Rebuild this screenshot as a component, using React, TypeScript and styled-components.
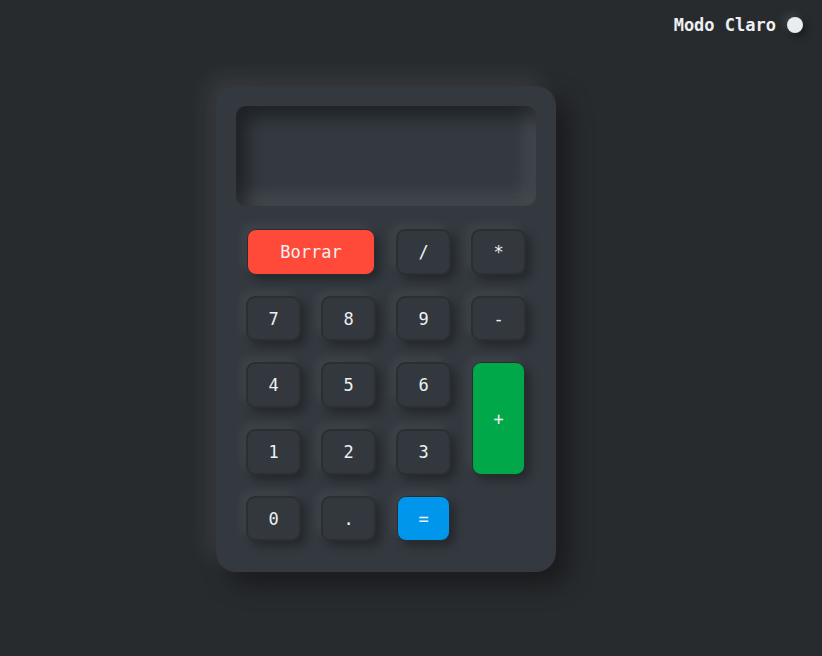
import React from "react";
import styled, { createGlobalStyle, css } from "styled-components";

const Global = createGlobalStyle`
  html, body { margin: 0; padding: 0; }
  body {
    background: #282b2e;
    width: 822px;
    height: 656px;
    overflow: hidden;
    font-family: "DejaVu Sans Mono", monospace;
  }
`;

const Page = styled.div`
  display: flex;
  flex-direction: column;
  width: 822px;
  height: 656px;
`;

const Header = styled.header`
  display: flex;
  justify-content: flex-end;
  align-items: center;
  gap: 11px;
  height: 49px;
  padding-right: 19px;
`;

const ModeLabel = styled.span`
  color: #eef0f2;
  font-weight: bold;
  font-size: 17px;
  line-height: 1;
  padding-top: 2px;
`;

const ToggleDot = styled.span`
  width: 16px;
  height: 16px;
  border-radius: 50%;
  background: #e9edf1;
  box-shadow: -3px -3px 8px rgba(255, 255, 255, 0.12), 3px 3px 8px rgba(0, 0, 0, 0.45);
`;

const Stage = styled.main`
  padding: 37px 0 0 216px;
`;

const Calculator = styled.div`
  width: 300px;
  padding: 20px 20px 21px;
  background: #33393f;
  border-radius: 20px;
  box-shadow: -10px -10px 22px rgba(255, 255, 255, 0.08), 12px 12px 26px rgba(0, 0, 0, 0.42);
`;

const Display = styled.div`
  height: 100px;
  border-radius: 10px;
  background: #33393f;
  box-shadow: inset 10px 10px 18px rgba(0, 0, 0, 0.42),
    inset -10px -10px 18px rgba(255, 255, 255, 0.09);
  margin-bottom: 13px;
`;

const Keys = styled.div`
  display: grid;
  grid-template-columns: repeat(4, 55px);
  grid-auto-rows: 45.7px;
  column-gap: 20px;
  row-gap: 21px;
  padding: 10px;
`;

type Tone = "plain" | "red" | "green" | "blue";

const toneBg: Record<Tone, string> = {
  plain: "#32383e",
  red: "#ff4a3a",
  green: "#00a84a",
  blue: "#0096eb",
};

const Key = styled.button<{ $tone?: Tone; $cols?: number; $rows?: number }>`
  grid-column: span ${(p) => p.$cols ?? 1};
  grid-row: span ${(p) => p.$rows ?? 1};
  box-sizing: border-box;
  margin: 0;
  border: 2px solid #2c2f32;
  border-radius: 9px;
  background: ${(p) => toneBg[p.$tone ?? "plain"]};
  color: #eef0f2;
  font-family: "DejaVu Sans Mono", monospace;
  font-size: 17px;
  padding: 0;
  display: flex;
  align-items: center;
  justify-content: center;
  box-shadow: -5px -5px 10px rgba(255, 255, 255, 0.06), 5px 5px 10px rgba(0, 0, 0, 0.3);
  ${(p) =>
    p.$tone && p.$tone !== "plain"
      ? css`
          margin: 0 1px;
          border-color: #2a2d30;
          border-width: 1.5px;
        `
      : ""}
`;

export default function App() {
  return (
    <Page>
      <Global />
      <Header>
        <ModeLabel>Modo Claro</ModeLabel>
        <ToggleDot />
      </Header>
      <Stage>
        <Calculator>
          <Display />
          <Keys>
            <Key $tone="red" $cols={2}>Borrar</Key>
            <Key>/</Key>
            <Key>*</Key>
            <Key>7</Key>
            <Key>8</Key>
            <Key>9</Key>
            <Key>-</Key>
            <Key>4</Key>
            <Key>5</Key>
            <Key>6</Key>
            <Key $tone="green" $rows={2}>+</Key>
            <Key>1</Key>
            <Key>2</Key>
            <Key>3</Key>
            <Key>0</Key>
            <Key>.</Key>
            <Key $tone="blue">=</Key>
          </Keys>
        </Calculator>
      </Stage>
    </Page>
  );
}
